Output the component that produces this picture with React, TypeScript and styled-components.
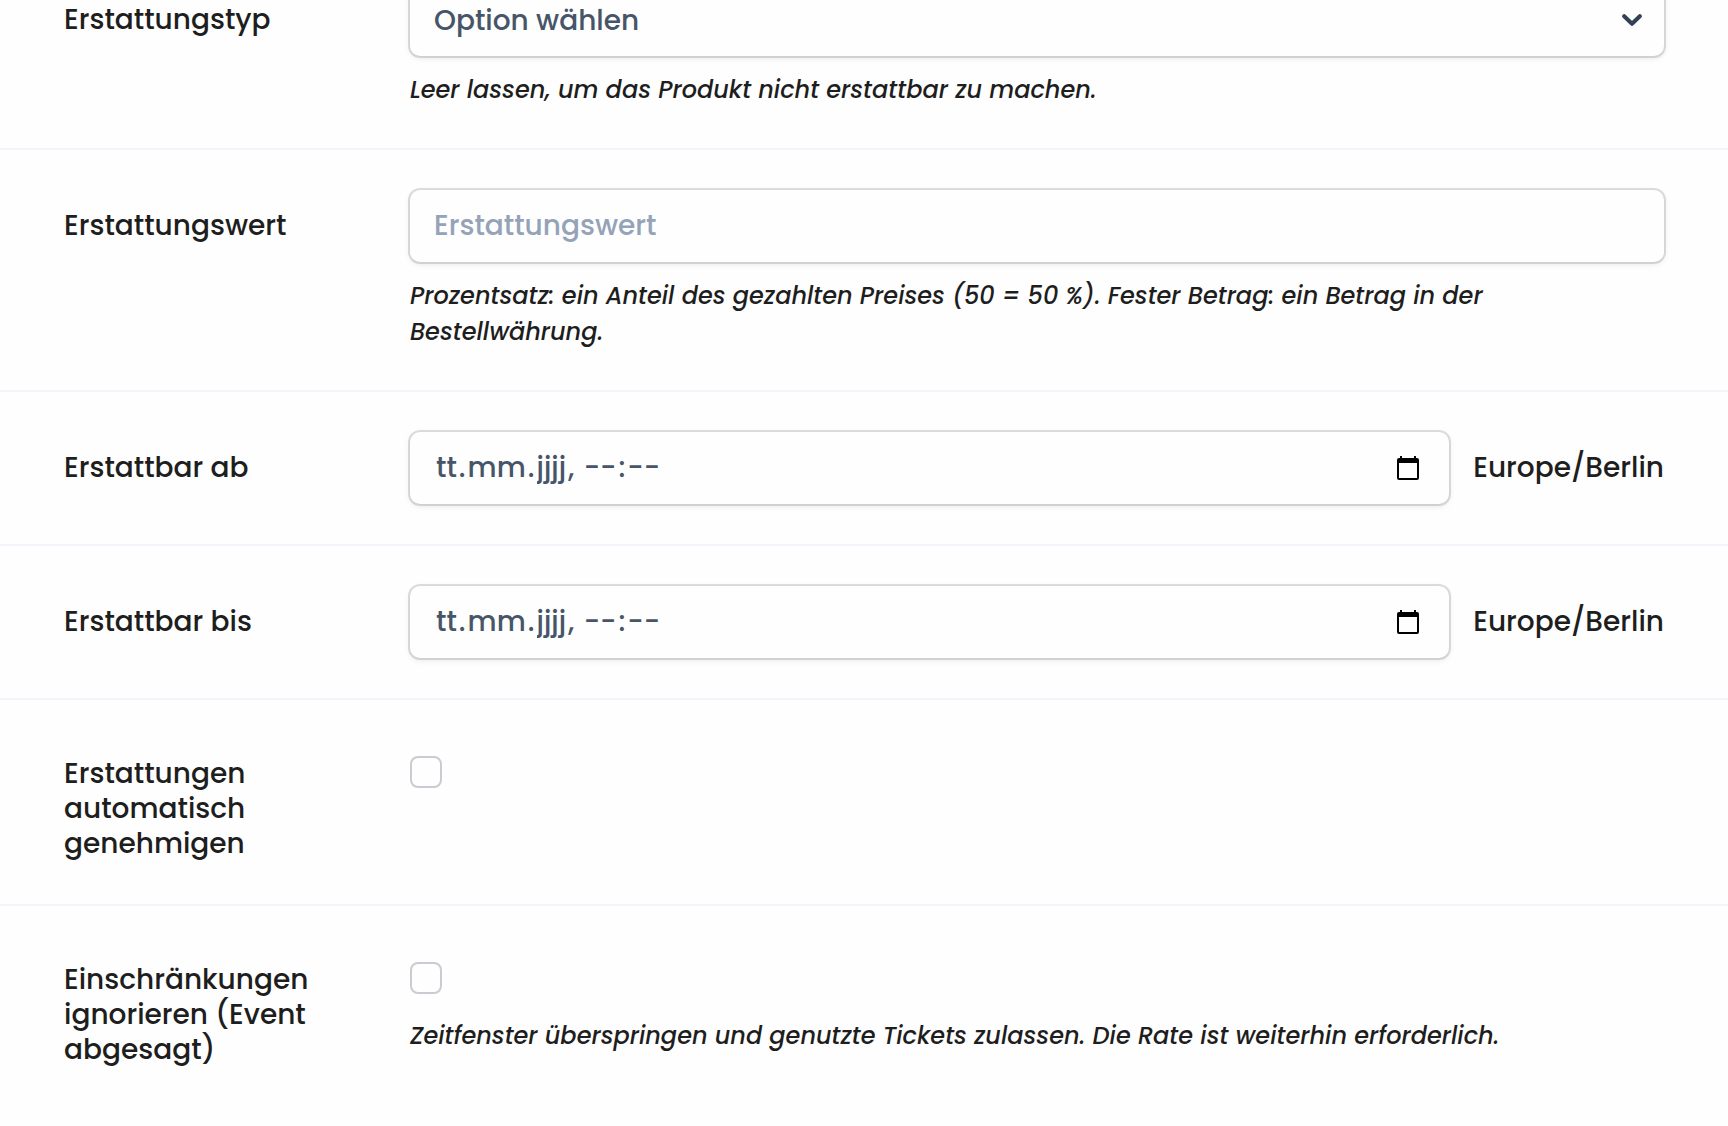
import React from 'react';
import type { ReactNode } from 'react';
import styled, { createGlobalStyle } from 'styled-components';

const fontStack = `Poppins, Inter, "Open Sans", "Liberation Sans", sans-serif`;

const GlobalStyle = createGlobalStyle`
  *, *::before, *::after { box-sizing: border-box; }
  body {
    margin: 0;
    background: #fefefe;
    color: #1e1e1e;
    font-family: ${fontStack};
    font-size: 28px;
    font-weight: 500;
    overflow-x: hidden;
  }
  input, select, button { font: inherit; }
`;

/* The form is shown scrolled a little way into its first row. */
const Form = styled.form`
  margin-top: -56px;
`;

const Row = styled.div`
  display: grid;
  grid-template-columns: 314px minmax(0, 1fr);
  column-gap: 32px;
  align-items: start;
  padding: 40px 64px;

  & + & {
    border-top: 2px solid #f1f5f9;
  }
`;

const Label = styled.label<{ $tick?: boolean }>`
  padding: ${(p) => (p.$tick ? '16px 0 3px' : '18px 0')};
  line-height: 35px;
`;

const Control = styled.div`
  min-width: 0;
`;

const Hint = styled.p`
  margin: 16px 0 0;
  font-size: 24px;
  font-style: italic;
  line-height: 36px;
`;

const FieldLine = styled.div`
  display: flex;
  align-items: flex-start;
  gap: 24px;
`;

const Zone = styled.span`
  padding: 18px 0;
  line-height: 35px;
`;

const Box = styled.div`
  display: flex;
  flex: 1;
  align-items: center;
  height: 72px;
  min-width: 0;
  padding: 0 22px 0 24px;
  border-radius: 10px;
  background: #fefefe;
  box-shadow: 0 0 0 2px rgba(0, 0, 0, 0.12), 0 2px 6px rgba(0, 0, 0, 0.1);
`;

const TextInput = styled.input`
  flex: 1;
  min-width: 0;
  height: 100%;
  padding: 0;
  border: 0;
  outline: 0;
  background: transparent;
  color: #475569;

  &::placeholder {
    color: #94a3b8;
    opacity: 1;
  }
`;

const Segments = styled.div`
  display: flex;
  flex: 1;
  align-items: center;
  color: #475569;
  line-height: 42px;
  white-space: pre;
`;

const Segment = styled.input`
  field-sizing: content;
  padding: 0 2px;
  border: 0;
  outline: 0;
  background: transparent;
  color: inherit;

  &::placeholder {
    color: inherit;
    opacity: 1;
  }

  &:focus {
    border-radius: 2px;
    background: #e2e8f0;
  }
`;

const Select = styled.select`
  flex: 1;
  min-width: 0;
  height: 100%;
  padding: 0;
  border: 0;
  outline: 0;
  appearance: none;
  background: transparent;
  color: #475569;
`;

const PickerButton = styled.button`
  display: flex;
  margin-right: 8px;
  padding: 0;
  border: 0;
  background: transparent;
  color: #000;
  cursor: pointer;
`;

const TickBox = styled.input`
  display: block;
  appearance: none;
  width: 32px;
  height: 32px;
  margin: 16px 0 24px;
  border: 2px solid #cbcbd1;
  border-radius: 8px;
  background: #fefefe;

  &:checked {
    background: #475569;
  }
`;

const ChevronIcon = () => (
  <svg width="20" height="12" viewBox="0 0 20 12" fill="none" aria-hidden="true">
    <path d="M2.2 2.2 10 9.8l7.8-7.6" stroke="#334155" strokeWidth="4" strokeLinecap="round" strokeLinejoin="round" />
  </svg>
);

const CalendarIcon = () => (
  <svg width="22" height="24" viewBox="0 0 22 24" aria-hidden="true">
    <path
      fill="currentColor"
      fillRule="evenodd"
      d="M3 0h2v2h12V0h2v2h1a2 2 0 0 1 2 2v18a2 2 0 0 1-2 2H2a2 2 0 0 1-2-2V4a2 2 0 0 1 2-2h1zM2 7v15h18V7z"
    />
  </svg>
);

interface FieldProps {
  id: string;
  label: string;
  hint?: string;
  tick?: boolean;
  children: ReactNode;
}

const Field = ({ id, label, hint, tick, children }: FieldProps) => (
  <Row>
    <Label htmlFor={id} $tick={tick}>
      {label}
    </Label>
    <Control>
      {children}
      {hint && <Hint>{hint}</Hint>}
    </Control>
  </Row>
);

const DateField = ({ id, label }: { id: string; label: string }) => (
  <Field id={id} label={label}>
    <FieldLine>
      <Box>
        <Segments role="group" aria-label={label}>
          <Segment id={id} aria-label={`${label}: Tag`} placeholder="tt" maxLength={2} />
          <span>.</span>
          <Segment aria-label={`${label}: Monat`} placeholder="mm" maxLength={2} />
          <span>.</span>
          <Segment aria-label={`${label}: Jahr`} placeholder="jjjj" maxLength={4} />
          <span>{', '}</span>
          <Segment aria-label={`${label}: Stunde`} placeholder="--" maxLength={2} />
          <span>:</span>
          <Segment aria-label={`${label}: Minute`} placeholder="--" maxLength={2} />
        </Segments>
        <PickerButton type="button" aria-label="Datum auswählen">
          <CalendarIcon />
        </PickerButton>
      </Box>
      <Zone>Europe/Berlin</Zone>
    </FieldLine>
  </Field>
);

export default function App() {
  return (
    <>
      <GlobalStyle />
      <Form>
        <Field id="refund-type" label="Erstattungstyp" hint="Leer lassen, um das Produkt nicht erstattbar zu machen.">
          <Box>
            <Select id="refund-type" defaultValue="">
              <option value="">Option wählen</option>
            </Select>
            <ChevronIcon />
          </Box>
        </Field>
        <Field
          id="refund-value"
          label="Erstattungswert"
          hint="Prozentsatz: ein Anteil des gezahlten Preises (50 = 50 %). Fester Betrag: ein Betrag in der Bestellwährung."
        >
          <Box>
            <TextInput id="refund-value" type="text" placeholder="Erstattungswert" />
          </Box>
        </Field>
        <DateField id="refund-from" label="Erstattbar ab" />
        <DateField id="refund-until" label="Erstattbar bis" />
        <Field id="auto-approve" label="Erstattungen automatisch genehmigen" tick>
          <TickBox id="auto-approve" type="checkbox" />
        </Field>
        <Field
          id="ignore-limits"
          label="Einschränkungen ignorieren (Event abgesagt)"
          hint="Zeitfenster überspringen und genutzte Tickets zulassen. Die Rate ist weiterhin erforderlich."
          tick
        >
          <TickBox id="ignore-limits" type="checkbox" />
        </Field>
      </Form>
    </>
  );
}
